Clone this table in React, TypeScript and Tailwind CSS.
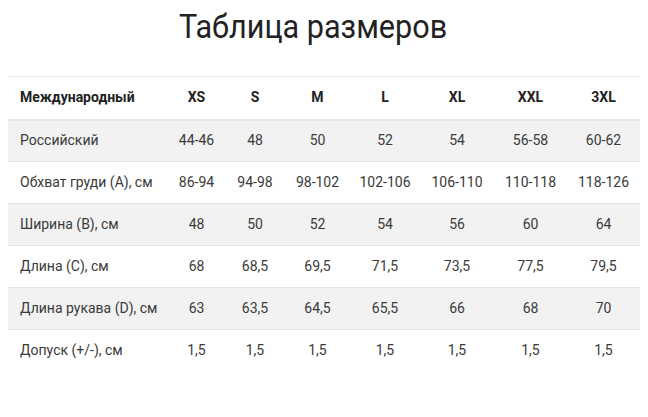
const headers = ['XS', 'S', 'M', 'L', 'XL', 'XXL', '3XL'];

const rows = [
  { label: 'Российский', values: ['44-46', '48', '50', '52', '54', '56-58', '60-62'] },
  { label: 'Обхват груди (A), см', values: ['86-94', '94-98', '98-102', '102-106', '106-110', '110-118', '118-126'] },
  { label: 'Ширина (B), см', values: ['48', '50', '52', '54', '56', '60', '64'] },
  { label: 'Длина (C), см', values: ['68', '68,5', '69,5', '71,5', '73,5', '77,5', '79,5'] },
  { label: 'Длина рукава (D), см', values: ['63', '63,5', '64,5', '65,5', '66', '68', '70'] },
  { label: 'Допуск (+/-), см', values: ['1,5', '1,5', '1,5', '1,5', '1,5', '1,5', '1,5'] },
];

const App = () => {
  return (
    <div className="w-[648px] h-[417px] bg-white font-['Roboto',sans-serif] text-[#3a3a3a]">
      {/* Title */}
      <h1 className="pt-[6px] pr-[22px] text-center text-[34px] leading-[40px] text-[#222]">
        <span className="inline-block scale-x-90">Таблица размеров</span>
      </h1>

      {/* Size table */}
      <div className="mt-[30px] pl-[8px]">
        <table className="table-fixed border-collapse w-[632px] text-[14px]">
          <colgroup>
            <col className="w-[160px]" />
            <col className="w-[57px]" />
            <col className="w-[60px]" />
            <col className="w-[65px]" />
            <col className="w-[70px]" />
            <col className="w-[74px]" />
            <col className="w-[73px]" />
            <col className="w-[73px]" />
          </colgroup>
          <thead>
            <tr className="h-[43px] border-t border-b-2 border-[#e6e6e6]">
              <th className="pl-[12px] text-left font-bold text-[#222]">Международный</th>
              {headers.map((h) => (
                <th key={h} className="text-center font-bold text-[#222]">
                  {h}
                </th>
              ))}
            </tr>
          </thead>
          <tbody>
            {rows.map((row, i) => (
              <tr
                key={row.label}
                className={
                  (i % 2 === 0 ? 'bg-[#f2f2f2] ' : 'bg-white ') +
                  (i < rows.length - 1 ? 'border-b border-[#e4e4e4] h-[42px]' : 'h-[42px]')
                }
              >
                <td className="pl-[12px] text-left">{row.label}</td>
                {row.values.map((v, j) => (
                  <td key={j} className="text-center">
                    {v}
                  </td>
                ))}
              </tr>
            ))}
          </tbody>
        </table>
      </div>
    </div>
  );
};

export default App;
